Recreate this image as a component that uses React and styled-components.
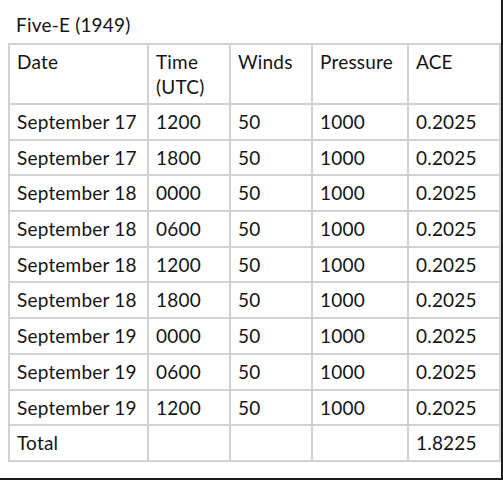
import React from "react";
import styled, { createGlobalStyle } from "styled-components";

const Global = createGlobalStyle`
  html, body { margin: 0; padding: 0; background: #fff; }
  body { font-family: Lato, "Open Sans", sans-serif; color: #141414; }
`;

const Frame = styled.div`
  box-sizing: border-box;
  width: 503px;
  height: 480px;
  border-right: 2px solid #1c1c1c;
  border-bottom: 2px solid #1c1c1c;
  padding: 12px 0 0 8px;
`;

const Title = styled.div`
  font-size: 19px;
  line-height: 25px;
  padding-left: 8px;
  margin-bottom: 6px;
  letter-spacing: 0.2px;
`;

const Table = styled.table`
  border-collapse: collapse;
  font-size: 19px;
  line-height: 25px;
  letter-spacing: 0.2px;
  table-layout: fixed;
  width: 491px;
`;

const Cell = styled.td`
  border: 2px solid #d2d2d2;
  padding: 4px 7px 4px 7px;
  vertical-align: top;
  text-align: left;
  font-weight: normal;
  white-space: ${(p) => (p.$wrap ? "normal" : "nowrap")};
  height: ${(p) => (p.$head ? "50px" : "25.7px")};
`;

const cols = [139, 82, 82, 96, 92];
const rows = [
  ["September 17", "1200"],
  ["September 17", "1800"],
  ["September 18", "0000"],
  ["September 18", "0600"],
  ["September 18", "1200"],
  ["September 18", "1800"],
  ["September 19", "0000"],
  ["September 19", "0600"],
  ["September 19", "1200"],
];

export default function App() {
  return (
    <Frame>
      <Global />
      <Title>Five-E (1949)</Title>
      <Table>
        <colgroup>
          {cols.map((w, i) => (
            <col key={i} style={{ width: w }} />
          ))}
        </colgroup>
        <tbody>
          <tr>
            <Cell $head>Date</Cell>
            <Cell $head $wrap>
              Time
              <br />
              (UTC)
            </Cell>
            <Cell $head>Winds</Cell>
            <Cell $head>Pressure</Cell>
            <Cell $head>ACE</Cell>
          </tr>
          {rows.map(([d, t], i) => (
            <tr key={i}>
              <Cell>{d}</Cell>
              <Cell>{t}</Cell>
              <Cell>50</Cell>
              <Cell>1000</Cell>
              <Cell>0.2025</Cell>
            </tr>
          ))}
          <tr>
            <Cell>Total</Cell>
            <Cell />
            <Cell />
            <Cell />
            <Cell>1.8225</Cell>
          </tr>
        </tbody>
      </Table>
    </Frame>
  );
}
